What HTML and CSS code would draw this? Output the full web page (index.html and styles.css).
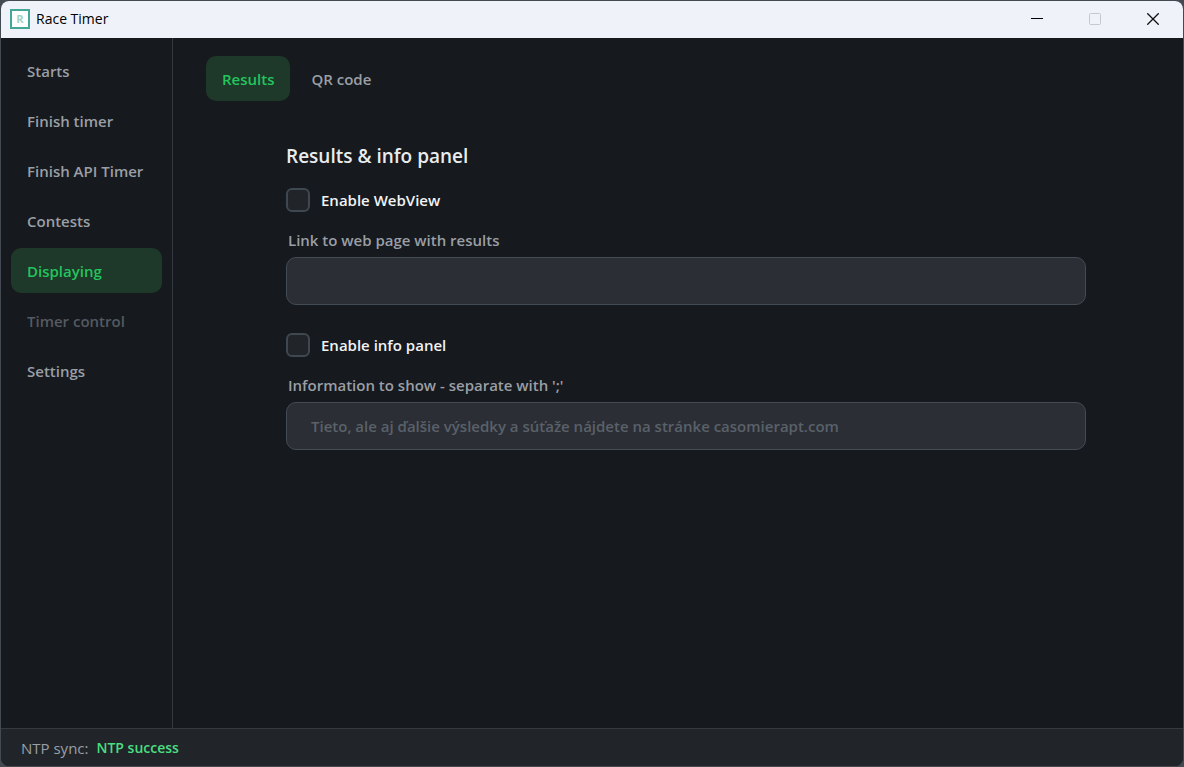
FILE: index.html
```
<!DOCTYPE html>
<html lang="en">

<head>
  <meta charset="utf-8">
  <meta name="viewport" content="width=device-width, initial-scale=1.0">
  <link rel="stylesheet" href="styles.css">
  <title>Race Timer</title>
</head>

<body>
  <div class="window">
    <header class="titlebar">
      <svg class="app-icon" viewBox="0 0 20 20" aria-hidden="true">
        <rect x="1" y="1" width="18" height="18" fill="#fff" stroke="#45a798" stroke-width="2"/>
        <text x="10" y="14" text-anchor="middle">R</text>
      </svg>
      <span class="app-title">Race Timer</span>
      <div class="window-buttons">
        <button type="button" aria-label="Minimize">
          <svg viewBox="0 0 12 12"><path d="M0 5.5h12" stroke="#000"/></svg>
        </button>
        <button type="button" aria-label="Maximize" disabled>
          <svg viewBox="0 0 12 12"><rect x=".5" y=".5" width="11" height="11" rx="1" stroke="#c6c8cd"/></svg>
        </button>
        <button type="button" aria-label="Close">
          <svg viewBox="0 0 12 12"><path d="M.3.3l11.4 11.4M11.7.3L.3 11.7" stroke="#111" stroke-width="1.3"/></svg>
        </button>
      </div>
    </header>

    <div class="content">
      <nav class="sidebar">
        <button type="button" class="tab">Starts</button>
        <button type="button" class="tab">Finish timer</button>
        <button type="button" class="tab">Finish API Timer</button>
        <button type="button" class="tab">Contests</button>
        <button type="button" class="tab active">Displaying</button>
        <button type="button" class="tab" disabled>Timer control</button>
        <button type="button" class="tab">Settings</button>
      </nav>

      <main>
        <div class="top-tabs">
          <button type="button" class="tab active">Results</button>
          <button type="button" class="tab">QR code</button>
        </div>

        <form class="panel">
          <h1>Results &amp; info panel</h1>

          <div class="group">
            <label class="check"><input type="checkbox" id="enable-webview"> Enable WebView</label>
            <label class="field-label" for="results-link">Link to web page with results</label>
            <input class="field" type="text" id="results-link">
          </div>

          <div class="group">
            <label class="check"><input type="checkbox" id="enable-info"> Enable info panel</label>
            <label class="field-label" for="info-text">Information to show - separate with ';'</label>
            <input class="field" type="text" id="info-text" placeholder="Tieto, ale aj ďalšie výsledky a súťaže nájdete na stránke casomierapt.com">
          </div>
        </form>
      </main>
    </div>

    <footer class="statusbar">
      <span>NTP sync:</span>
      <span class="success">NTP success</span>
    </footer>
  </div>
</body>

</html>
```
FILE: styles.css
```
* {
  box-sizing: border-box;
}
body {
  margin: 0;
  height: 100vh;
  padding: 1px;
  background: #434a52;
  font-family: "Open Sans", "Noto Sans", sans-serif;
  font-size: 15px;
  line-height: 20px;
}
button, input {
  font: inherit;
}
.window {
  display: flex;
  flex-direction: column;
  height: 100%;
  overflow: hidden;
  border-radius: 8px;
  background: #16191d;
}

.titlebar {
  display: flex;
  align-items: center;
  height: 37px;
  padding: 0 1px 1px 9px;
  background: #f0f2fa;
  color: #000;
}
.app-icon {
  width: 20px;
  height: 20px;
  margin-right: 6px;
}
.app-icon text {
  font-size: 11px;
  font-weight: bold;
  fill: #9ed3c8;
}
.app-title {
  font-size: 14px;
}
.window-buttons {
  display: flex;
  align-self: stretch;
  margin-left: auto;
}
.window-buttons button {
  display: flex;
  align-items: center;
  justify-content: center;
  width: 58px;
  padding: 0;
  border: 0;
  background: none;
}
.window-buttons svg {
  width: 12px;
  height: 12px;
  fill: none;
}

.content {
  display: flex;
  flex: 1;
  min-height: 0;
}
.sidebar {
  display: flex;
  flex-direction: column;
  gap: 5px;
  width: 172px;
  padding: 10px;
  border-right: 1px solid #343a40;
}
.tab {
  height: 45px;
  padding: 0 16px;
  border: 0;
  border-radius: 10px;
  background: none;
  color: #9a9fa6;
  font-weight: 600;
  text-align: left;
  white-space: nowrap;
}
.tab.active {
  background: #1e3829;
  color: #22c55e;
}
.tab:disabled {
  color: #545a61;
}

main {
  flex: 1;
  padding: 18px 17px 18px 33px;
}
.top-tabs {
  display: flex;
  gap: 5px;
}
.panel {
  max-width: 800px;
  margin: 40px auto 0;
}
h1 {
  margin: 0 0 16px;
  font-size: 19px;
  font-weight: 600;
  line-height: 30px;
  color: #e9ecef;
}
.group {
  display: flex;
  flex-direction: column;
  margin-bottom: 27px;
}
.check {
  display: flex;
  align-items: center;
  gap: 11px;
  height: 26px;
  margin-bottom: 17px;
  color: #f1f3f5;
  font-weight: 600;
}
.check input {
  appearance: none;
  width: 24px;
  height: 24px;
  margin: 0;
  border: 2px solid #3f4851;
  border-radius: 6px;
  background: #212529;
}
.check input:checked {
  background: #22c55e;
}
.field-label {
  margin: 0 2px 7px;
  color: #9a9fa6;
  font-weight: 600;
}
.field {
  width: 100%;
  height: 48px;
  padding: 0 24px;
  border: 1px solid #434b54;
  border-radius: 10px;
  background: #2b2e35;
  color: #f1f3f5;
  font-weight: 600;
}
.field::placeholder {
  color: #5a6169;
}

.statusbar {
  display: flex;
  align-items: center;
  gap: 8px;
  height: 38px;
  padding: 0 20px;
  border-top: 1px solid #343a40;
  background: #212529;
  color: #9a9fa6;
}
.success {
  color: #4ade80;
  font-size: 14px;
  font-weight: 600;
}
```
